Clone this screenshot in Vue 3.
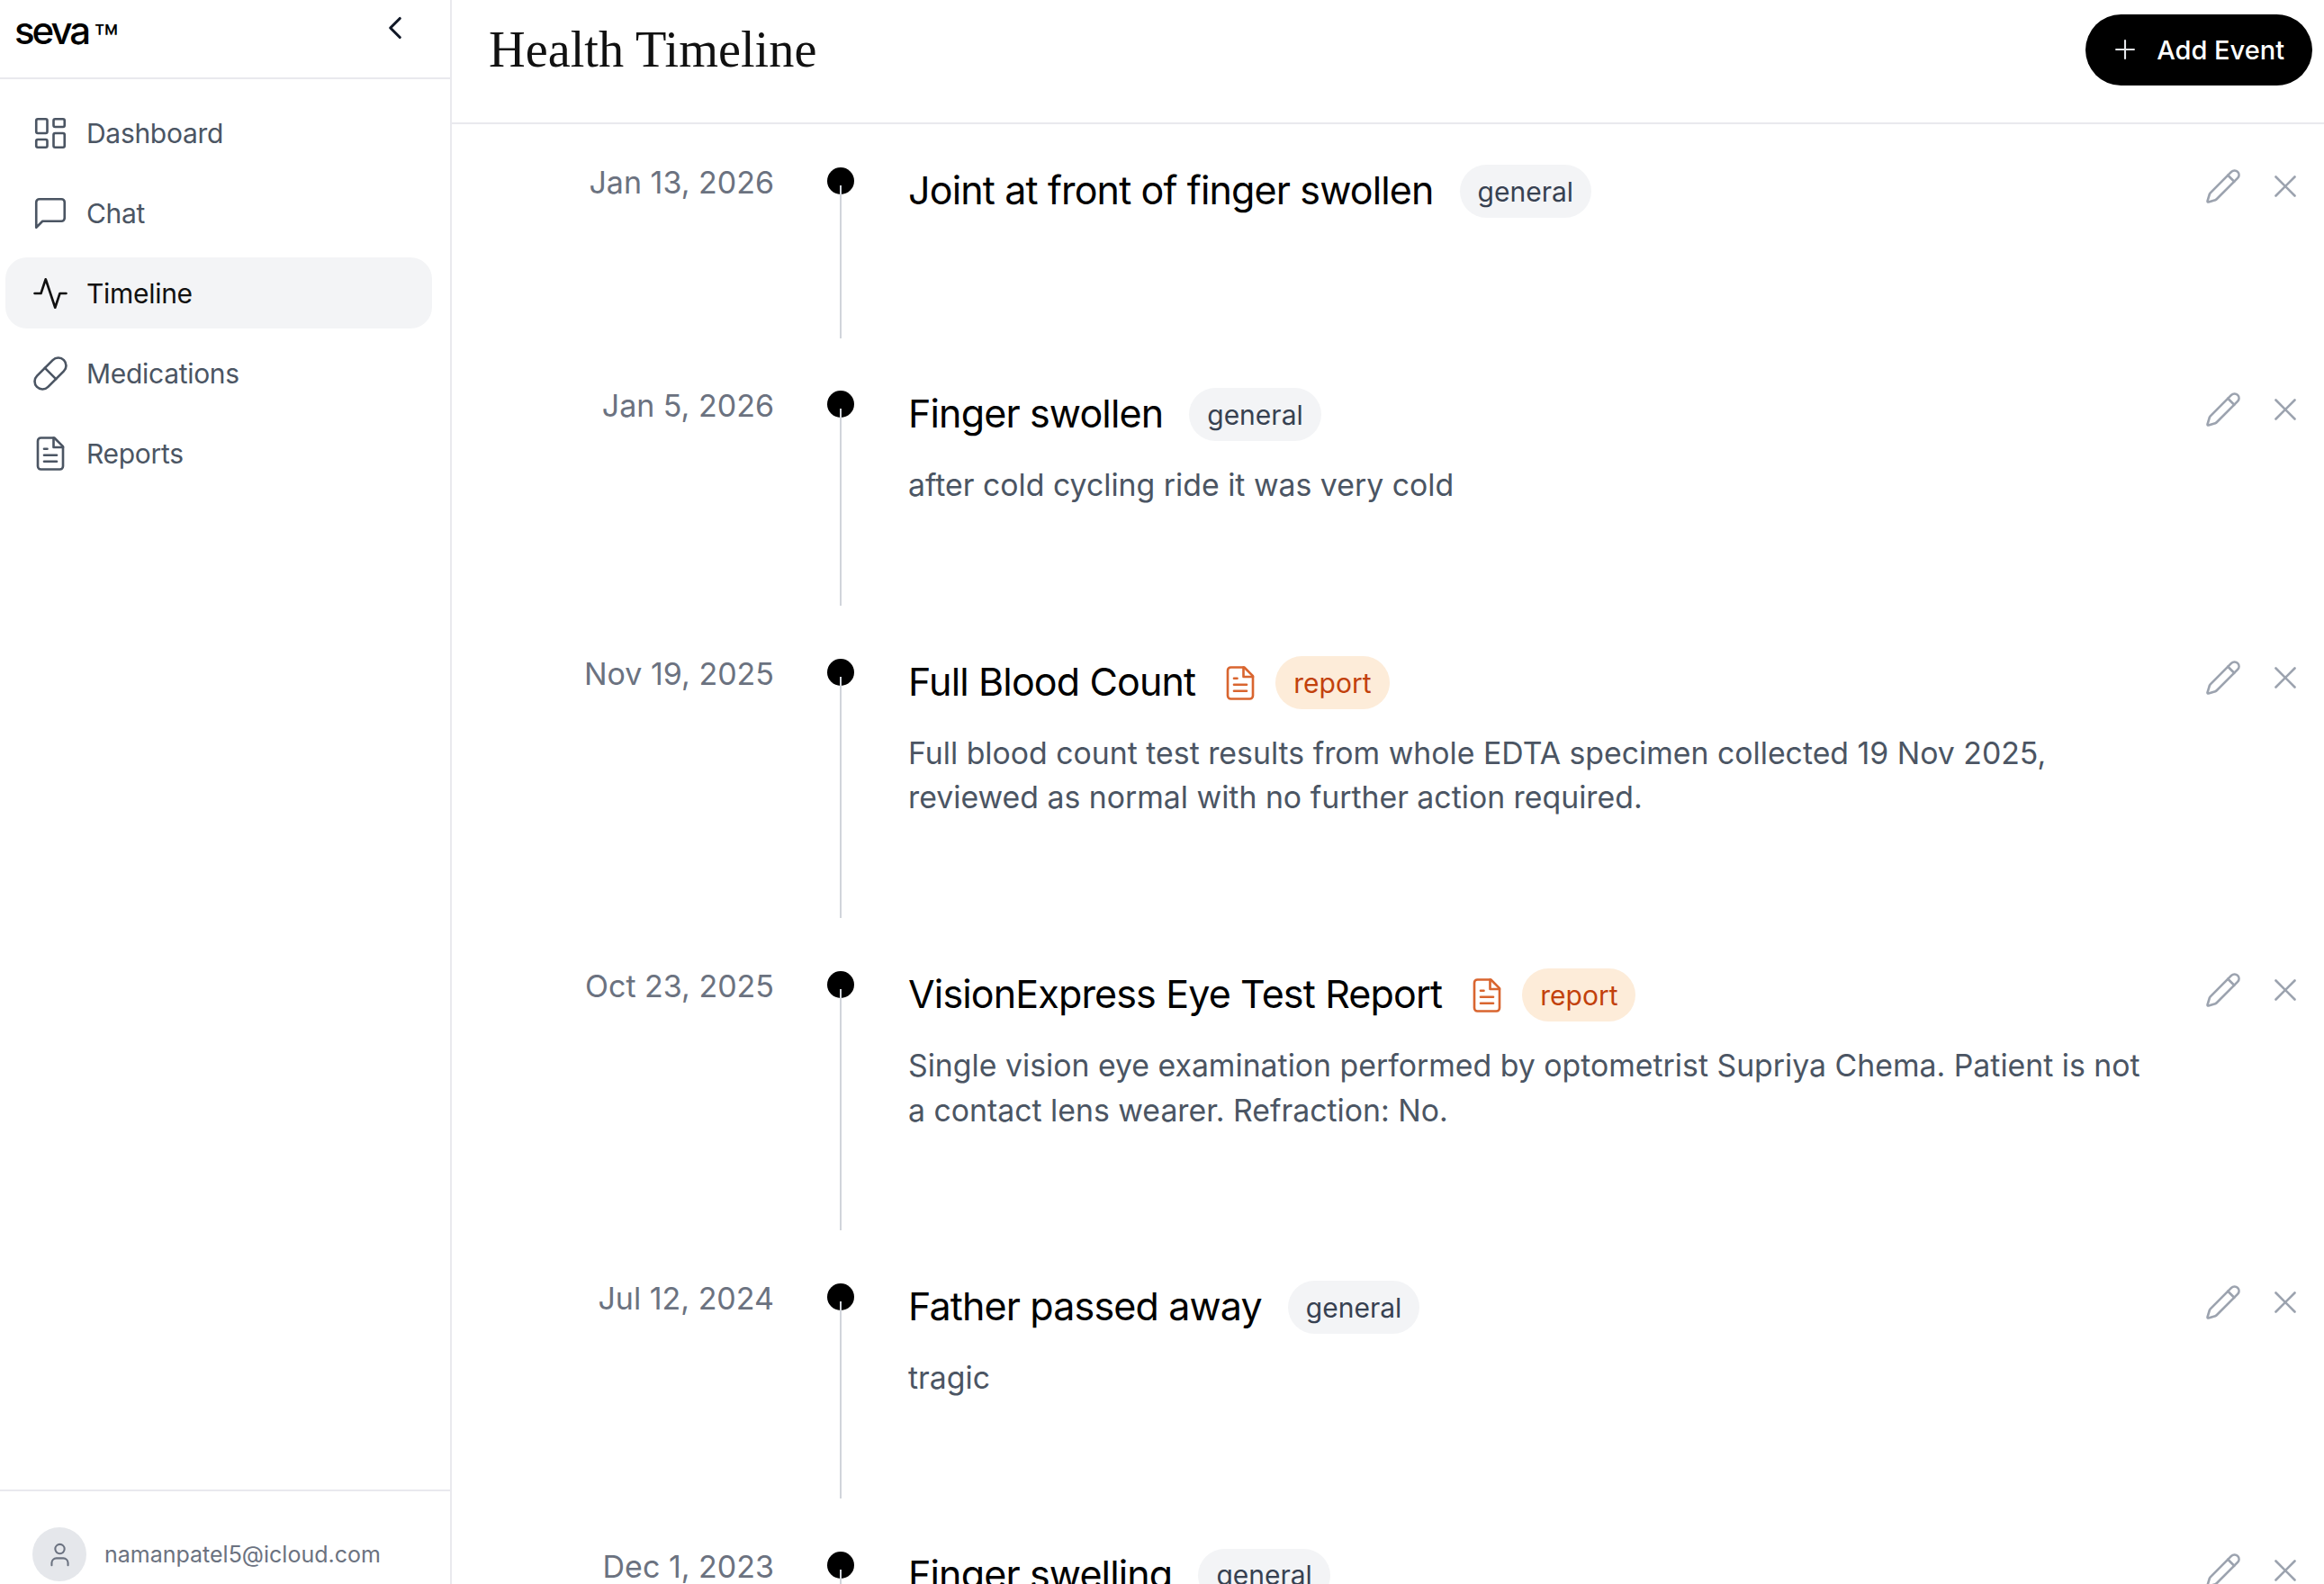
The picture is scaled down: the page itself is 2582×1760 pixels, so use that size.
<script setup>
const icons = {
  dashboard: [
    'M4 3h5a1 1 0 0 1 1 1v7a1 1 0 0 1-1 1H4a1 1 0 0 1-1-1V4a1 1 0 0 1 1-1z',
    'M15 3h5a1 1 0 0 1 1 1v3a1 1 0 0 1-1 1h-5a1 1 0 0 1-1-1V4a1 1 0 0 1 1-1z',
    'M15 12h5a1 1 0 0 1 1 1v7a1 1 0 0 1-1 1h-5a1 1 0 0 1-1-1v-7a1 1 0 0 1 1-1z',
    'M4 16h5a1 1 0 0 1 1 1v3a1 1 0 0 1-1 1H4a1 1 0 0 1-1-1v-3a1 1 0 0 1 1-1z',
  ],
  chat: ['M21 15a2 2 0 0 1-2 2H7l-4 4V5a2 2 0 0 1 2-2h14a2 2 0 0 1 2 2z'],
  activity: ['M22 12h-4l-3 9L9 3l-3 9H2'],
  pill: ['m10.5 20.5 10-10a4.95 4.95 0 1 0-7-7l-10 10a4.95 4.95 0 1 0 7 7Z', 'm8.5 8.5 7 7'],
  file: [
    'M14.5 2H6a2 2 0 0 0-2 2v16a2 2 0 0 0 2 2h12a2 2 0 0 0 2-2V7.5L14.5 2z',
    'M14 2v6h6',
    'M16 13H8',
    'M16 17H8',
    'M10 9H8',
  ],
  pencil: [
    'M21.174 6.812a1 1 0 0 0-3.986-3.987L3.842 16.174a2 2 0 0 0-.5.83l-1.321 4.352a.5.5 0 0 0 .623.622l4.353-1.32a2 2 0 0 0 .83-.497z',
    'm15 5 4 4',
  ],
  close: ['M18 6 6 18', 'm6 6 12 12'],
  plus: ['M5 12h14', 'M12 5v14'],
  chevron: ['m15 18-6-6 6-6'],
  user: ['M12 3a4 4 0 1 0 0 8 4 4 0 0 0 0-8z', 'M5 21v-2a4 4 0 0 1 4-4h6a4 4 0 0 1 4 4v2'],
}

const navItems = [
  { label: 'Dashboard', icon: 'dashboard' },
  { label: 'Chat', icon: 'chat' },
  { label: 'Timeline', icon: 'activity', active: true },
  { label: 'Medications', icon: 'pill' },
  { label: 'Reports', icon: 'file' },
]

const events = [
  { date: 'Jan 13, 2026', title: 'Joint at front of finger swollen', type: 'general' },
  { date: 'Jan 5, 2026', title: 'Finger swollen', type: 'general', text: 'after cold cycling ride it was very cold' },
  {
    date: 'Nov 19, 2025',
    title: 'Full Blood Count',
    type: 'report',
    text: 'Full blood count test results from whole EDTA specimen collected 19 Nov 2025, reviewed as normal with no further action required.',
  },
  {
    date: 'Oct 23, 2025',
    title: 'VisionExpress Eye Test Report',
    type: 'report',
    text: 'Single vision eye examination performed by optometrist Supriya Chema. Patient is not a contact lens wearer. Refraction: No.',
  },
  { date: 'Jul 12, 2024', title: 'Father passed away', type: 'general', text: 'tragic' },
  { date: 'Dec 1, 2023', title: 'Finger swelling', type: 'general' },
]
</script>

<template>
  <div class="app">
    <aside class="sidebar">
      <div class="brand">
        <span class="logo">seva<span class="tm">™</span></span>
        <svg class="icon collapse" viewBox="0 0 24 24"><path v-for="d in icons.chevron" :key="d" :d="d" /></svg>
      </div>
      <nav class="nav">
        <a v-for="item in navItems" :key="item.label" class="nav-item" :class="{ 'is-active': item.active }">
          <svg class="icon" viewBox="0 0 24 24"><path v-for="d in icons[item.icon]" :key="d" :d="d" /></svg>
          <span>{{ item.label }}</span>
        </a>
      </nav>
      <div class="account">
        <span class="avatar">
          <svg viewBox="0 0 24 24"><path v-for="d in icons.user" :key="d" :d="d" /></svg>
        </span>
        <span class="email">namanpatel5@icloud.com</span>
      </div>
    </aside>

    <main class="main">
      <header class="topbar">
        <h1>Health Timeline</h1>
        <button type="button" class="add-btn">
          <svg viewBox="0 0 24 24"><path v-for="d in icons.plus" :key="d" :d="d" /></svg>
          Add Event
        </button>
      </header>

      <div class="events">
        <section v-for="ev in events" :key="ev.date" class="event">
          <div class="date">{{ ev.date }}</div>
          <div class="rail">
            <span class="dot"></span>
            <span class="line"></span>
          </div>
          <div class="body">
            <div class="heading">
              <h2>{{ ev.title }}</h2>
              <svg v-if="ev.type === 'report'" class="icon report-icon" viewBox="0 0 24 24"><path v-for="d in icons.file" :key="d" :d="d" /></svg>
              <span class="badge" :class="'badge-' + ev.type">{{ ev.type }}</span>
            </div>
            <p v-if="ev.text">{{ ev.text }}</p>
          </div>
          <div class="actions">
            <svg class="icon" viewBox="0 0 24 24"><path v-for="d in icons.pencil" :key="d" :d="d" /></svg>
            <svg class="icon" viewBox="0 0 24 24"><path v-for="d in icons.close" :key="d" :d="d" /></svg>
          </div>
        </section>
      </div>
    </main>
  </div>
</template>

<style scoped>
.app {
  display: flex;
  height: 1760px;
  overflow: hidden;
  background: #fff;
  color: #000;
  font-family: Inter, "Liberation Sans", sans-serif;
}
.icon {
  flex-shrink: 0;
  width: 42px;
  height: 42px;
  fill: none;
  stroke: currentColor;
  stroke-width: 1.5;
  stroke-linecap: round;
  stroke-linejoin: round;
}

.sidebar {
  display: flex;
  flex-direction: column;
  flex-shrink: 0;
  width: 502px;
  box-sizing: border-box;
  border-right: 2px solid #e9e9ee;
}
.brand {
  display: flex;
  align-items: center;
  justify-content: space-between;
  height: 88px;
  box-sizing: border-box;
  padding: 0 40px 24px 16px;
  border-bottom: 2px solid #e9e9ee;
}
.logo {
  margin-top: 6px;
  font-size: 42px;
  font-weight: 500;
  letter-spacing: -3px;
  line-height: 1;
}
.tm {
  margin-left: 6px;
  font-size: 45px;
  font-weight: 400;
  letter-spacing: 0;
  line-height: 0;
  vertical-align: -11px;
}
.collapse { color: #111827; stroke-width: 1.8; }

.nav {
  flex: 1;
  display: flex;
  flex-direction: column;
  gap: 10px;
  padding: 20px 20px 0 6px;
}
.nav-item {
  display: flex;
  align-items: center;
  gap: 19px;
  height: 79px;
  padding-left: 29px;
  border-radius: 24px;
  color: #4b5563;
  font-size: 30px;
  letter-spacing: -0.3px;
}
.nav-item.is-active {
  background: #f3f4f6;
  color: #111;
}

.account {
  display: flex;
  align-items: center;
  gap: 20px;
  height: 105px;
  box-sizing: border-box;
  padding: 37px 36px 0;
  border-top: 2px solid #e9e9ee;
}
.avatar {
  display: flex;
  align-items: center;
  justify-content: center;
  width: 60px;
  height: 60px;
  border-radius: 50%;
  background: #e5e7eb;
  color: #6b7280;
}
.avatar svg {
  width: 31px;
  height: 31px;
  fill: none;
  stroke: currentColor;
  stroke-width: 1.6;
  stroke-linecap: round;
  stroke-linejoin: round;
}
.email {
  color: #6b7280;
  font-size: 25px;
}

.main {
  flex: 1;
  min-width: 0;
}
.topbar {
  display: flex;
  align-items: center;
  justify-content: space-between;
  height: 138px;
  box-sizing: border-box;
  padding: 0 13px 26px 41px;
  border-bottom: 2px solid #e9e9ee;
}
.topbar h1 {
  margin: 0;
  color: #111;
  font-family: "Liberation Serif", serif;
  font-size: 56.3px;
  font-weight: 400;
}
.add-btn {
  display: flex;
  align-items: center;
  gap: 18px;
  height: 79px;
  padding: 0 31px 0 27px;
  border: 0;
  border-radius: 40px;
  background: #000;
  color: #fff;
  font: 500 29px Inter, sans-serif;
}
.add-btn svg {
  width: 34px;
  height: 34px;
  fill: none;
  stroke: #e5e7eb;
  stroke-width: 1.5;
  stroke-linecap: round;
}

.events {
  padding: 45px 22px 0 0;
}
.event {
  display: grid;
  grid-template-columns: 358px 30px 1fr auto;
  margin-bottom: 55.8px;
}
.date {
  margin-top: -2px;
  color: #6b7280;
  font-size: 34px;
  line-height: 44px;
  text-align: right;
}
.rail {
  display: flex;
  flex-direction: column;
  align-items: center;
  margin: 3px 0 0 59px;
  width: 30px;
}
.dot {
  flex-shrink: 0;
  width: 30px;
  height: 30px;
  border-radius: 50%;
  background: #000;
}
.line {
  flex: 1;
  width: 2px;
  margin-top: -10px;
  background: #d1d5db;
}
.body {
  min-width: 0;
  margin-left: 119px;
  padding-right: 50px;
  padding-bottom: 109.5px;
}
.heading {
  display: flex;
  align-items: center;
  gap: 29px;
  height: 59px;
  margin-bottom: 24px;
}
.heading h2 {
  margin: 0 0 3px;
  font-size: 43px;
  font-weight: 400;
  letter-spacing: -0.85px;
}
.report-icon {
  margin-right: -11px;
  color: #d9652f;
}
.badge {
  display: flex;
  align-items: center;
  height: 59px;
  padding: 0 20px;
  border-radius: 30px;
  font-size: 30px;
}
.badge-general { background: #f3f4f6; color: #374151; }
.badge-report { background: #fdecd9; color: #c2410c; }
.body p {
  margin: 0;
  color: #4b5563;
  font-size: 33.8px;
  line-height: 49.4px;
}
.actions {
  display: flex;
  gap: 27.5px;
  margin-top: 3px;
  color: #9ca3af;
}
</style>
